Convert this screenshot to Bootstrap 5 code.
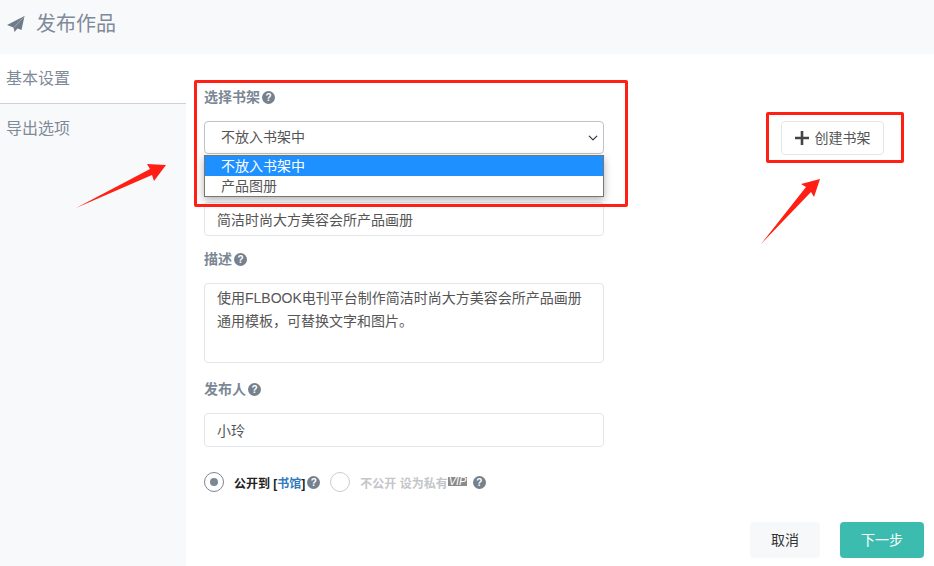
<!doctype html>
<html lang="zh">
<head>
<meta charset="utf-8">
<link href="https://cdn.jsdelivr.net/npm/bootstrap@5.3.0/dist/css/bootstrap.min.css" rel="stylesheet">
<style>
html,body{height:100%;overflow:hidden}
body{font-family:"Liberation Sans","Noto Sans CJK SC",sans-serif;font-size:14px;color:#555;background:#fff;position:relative;width:934px;height:566px}
.pg-head{height:54px;background:#f8f9fb;color:#7f8a99;font-size:20px;padding-left:7px;padding-bottom:6px;gap:11px}
.pg-body{height:512px}
.side{width:186px;background:#f8f9fb;color:#7f8a99;font-size:16px}
.side-item{height:50px;padding:0 6px 0;line-height:50px}
.side-item.on{background:#fff;border-bottom:1px solid #cdd3dc}
.form-pane{width:400px;margin-left:18px;padding-top:33px}
.lbl{display:flex;align-items:center;gap:2px;height:20px;margin-bottom:14px;font-weight:700;font-size:14px;line-height:20px;color:#7b8794}
.ctl{border:1px solid #e3e6ea;border-radius:4px;padding:0 12px;color:#555;font-size:14px;height:34px;box-shadow:none;background-color:#fff}
.sel{border-color:#bfc4ca;padding-left:16px;height:33px;margin-bottom:48px;color:#555;font-size:14px;padding-top:0;padding-bottom:0;border-radius:4px;background-size:12px 10px;background-position:right 4px center}
textarea.ctl{height:80px;padding:3px 12px;line-height:23px;resize:none;display:block}
.grp{margin-bottom:16px}
.grp-tight{margin-bottom:13px}
.qm{display:inline-block;flex:none;width:13px;height:13px;border-radius:50%;background:#76818e;color:#fff;font:700 10px/13px "Liberation Sans",sans-serif;text-align:center}
.rad{width:20px;height:20px;border-radius:50%;border:1px solid #c9cdd2;background:#fff;flex:none}
.rad.sel-on{border-color:#7b8794;position:relative}
.rad.sel-on::after{content:"";position:absolute;left:5px;top:5px;width:8px;height:8px;border-radius:50%;background:#7b8794}
.rad-row{margin-top:25px;font-size:12px;font-weight:700;height:20px}
.pub{color:#222;margin-left:10px;padding-top:3px}
.pub a{color:#2f7bbd;text-decoration:none}
.qm-a{margin-left:2px}
.qm-b{margin-left:6px}
.rad-b{margin-left:10px}
.nopub{color:#c4c6c9;margin-left:10px;padding-top:3px}
.vip{display:inline-block;background:#8a8a8a;color:#fff;font:italic 11px/9px "Liberation Sans",sans-serif;padding:0 1px;height:9px;width:19px;text-align:center;vertical-align:3px}
.create-wrap{margin-left:177px;padding-top:67px}
.btn-create{width:103px;height:34px;border:1px solid #e3e6ea;border-radius:4px;background:#fff;color:#555;font-size:14px;padding:0;gap:6px}
.foot{position:absolute;right:10px;bottom:8px;gap:20px}
.btn-c{width:70px;height:36px;background:#f6f8fa;border:0;color:#333;font-size:14px;padding:0;border-radius:4px}
.btn-n{width:84px;height:36px;background:#3cbcae;border:0;color:#fff;font-size:14px;padding:0;border-radius:4px}
.dd{position:absolute;left:204px;top:155px;width:400px;height:42px;background:#fff;border:1px solid #767676;box-shadow:0 3px 8px rgba(0,0,0,.3);font-size:14px;line-height:20px;color:#555;z-index:2}
.dd div{height:20px;padding-left:16px}
.dd .cur{background:#1e90ff;color:#fff}
.mark-box{position:absolute;border:3px solid #ff1f14;border-radius:2px;z-index:3}
.mb1{left:194px;top:80px;width:434px;height:127px}
.mb2{left:766px;top:112px;width:138px;height:51px}
.arrow{position:absolute;left:0;top:0;z-index:3;pointer-events:none}
</style>
</head>
<body>
<div class="pg-head d-flex align-items-center">
<svg width="18" height="17" viewBox="7.500 15 18 17"><path fill="#6f7b88" d="M25 15 7.500 24 14 26.500 15 31 18 27.500 22 29z"/><path fill="none" stroke="#aab2bb" stroke-width=".8" d="M14.500 26.500 25 15"/></svg>
<span>发布作品</span>
</div>
<div class="pg-body d-flex">
<nav class="side flex-shrink-0">
<div class="side-item on">基本设置</div>
<div class="side-item">导出选项</div>
</nav>
<main class="form-pane flex-shrink-0">
<label class="lbl">选择书架<span class="qm">?</span></label>
<select class="form-select sel"><option>不放入书架中</option><option>产品图册</option></select>
<div class="grp-tight"><input class="form-control ctl" value="简洁时尚大方美容会所产品画册"></div>
<div class="grp">
<label class="lbl">描述<span class="qm">?</span></label>
<textarea class="form-control ctl">使用FLBOOK电刊平台制作简洁时尚大方美容会所产品画册通用模板，可替换文字和图片。</textarea>
</div>
<div class="grp">
<label class="lbl">发布人<span class="qm">?</span></label>
<input class="form-control ctl" value="小玲">
</div>
<div class="rad-row d-flex align-items-center">
<span class="rad sel-on"></span>
<span class="pub">公开到 [<a href="#">书馆</a>]</span>
<span class="qm qm-a">?</span>
<span class="rad rad-b"></span>
<span class="nopub">不公开 设为私有<span class="vip">VIP</span></span>
<span class="qm qm-b">?</span>
</div>
</main>
<div class="create-wrap">
<button class="btn btn-create d-flex align-items-center justify-content-center"><svg width="14" height="14" viewBox="0 0 14 14"><path fill="#444" d="M5.700 0h2.600v5.700H14v2.600H8.300v5.700H5.700V8.300H0V5.700h5.700z"/></svg>创建书架</button>
</div>
</div>
<div class="foot d-flex">
<button class="btn btn-c">取消</button>
<button class="btn btn-n">下一步</button>
</div>
<div class="dd"><div class="cur">不放入书架中</div><div>产品图册</div></div>
<div class="mark-box mb1"></div>
<div class="mark-box mb2"></div>
<svg class="arrow" width="934" height="566" viewBox="0 0 934 566">
<path fill="#ff1f14" d="M76 208 150 169 147 164 166 165 154 181 152 175z"/>
<path fill="#ff1f14" d="M761 244 806 187 801 184 820 179 814 197 811 192z"/>
</svg>
</body>
</html>
